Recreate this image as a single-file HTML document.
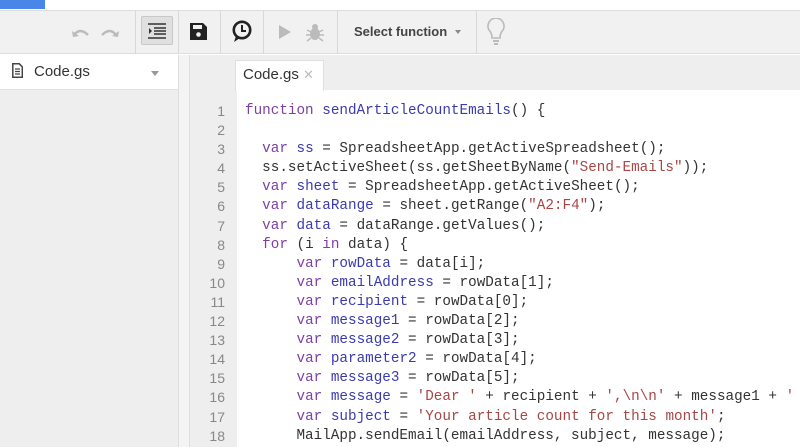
<!DOCTYPE html>
<html><head><style>
*{margin:0;padding:0;box-sizing:border-box}
body{width:800px;height:447px;overflow:hidden;background:#fff;font-family:"Liberation Sans",sans-serif;position:relative}
.abs{position:absolute}
.tb{left:0;top:10px;width:800px;height:44px;background:#f1f1f1;border-top:1px solid #ddd;border-bottom:1px solid #ddd}
.sep{position:absolute;top:0;width:1px;height:43px;background:#d8d8d8}
.code{left:245px;top:102px;font-family:"Liberation Mono",monospace;font-size:14.3px;line-height:19.1px;color:#333;white-space:pre}
.nums{left:190px;top:102px;width:35px;text-align:right;font-size:14px;line-height:19.1px;color:#888;font-family:"Liberation Sans",sans-serif}
.k{color:#7d3fa6}.d{color:#3b3bb0}.s{color:#a84646}
</style></head><body>
<div class="abs" style="left:0;top:0;width:45px;height:9px;background:#4a86e8"></div>
<div class="abs tb">
 <div class="sep" style="left:135px"></div>
 <div class="sep" style="left:178px"></div>
 <div class="sep" style="left:220px"></div>
 <div class="sep" style="left:263px"></div>
 <div class="sep" style="left:337px"></div>
 <div class="sep" style="left:476px"></div>
 <svg class="abs" style="left:70px;top:12px" width="56" height="20" viewBox="0 0 56 20"><path d="M4 12 Q10 4 18 12" fill="none" stroke="#bbb" stroke-width="2.5"/><path d="M2 8 L3 14 L9 13Z" fill="#bbb"/><path d="M32 12 Q40 4 46 12" fill="none" stroke="#bbb" stroke-width="2.5"/><path d="M49 8 L48 14 L42 13Z" fill="#bbb"/></svg>
 <div class="abs" style="left:141px;top:5px;width:32px;height:29px;background:#e0e0e0;border:1px solid #c8c8c8;border-radius:2px"></div>
 <svg class="abs" style="left:148px;top:12px" width="18" height="16" viewBox="0 0 18 16"><path d="M0 1h18M6 5h12M6 8h12M6 11h12M0 15h18" stroke="#333" stroke-width="1.6"/><path d="M1 5l3 3-3 3z" fill="#333"/></svg>
 <svg class="abs" style="left:190px;top:12px" width="17" height="17" viewBox="0 0 17 17"><path d="M0 0h13l4 4v13H0z" fill="#222"/><rect x="3" y="2" width="9" height="4" fill="#f1f1f1"/><circle cx="8.5" cy="11.5" r="2.3" fill="#f1f1f1"/></svg>
 <svg class="abs" style="left:231px;top:9px" width="22" height="24" viewBox="0 0 22 24"><circle cx="11" cy="10" r="8.2" fill="none" stroke="#222" stroke-width="2.6"/><path d="M5 16 L3 22 L9 18" fill="#222"/><path d="M11 5v6h4" fill="none" stroke="#222" stroke-width="2"/></svg>
 <svg class="abs" style="left:279px;top:14px" width="12" height="14"><path d="M0 0L12 7 0 14z" fill="#bbb"/></svg>
 <svg class="abs" style="left:305px;top:11px" width="20" height="20" viewBox="0 0 20 20"><ellipse cx="10" cy="12" rx="5" ry="6" fill="#bbb"/><circle cx="10" cy="5" r="3" fill="#bbb"/><path d="M2 8l4 2M18 8l-4 2M1 13h5M19 13h-5M2 19l4-3M18 19l-4-3" stroke="#bbb" stroke-width="1.5"/></svg>
 <div class="abs" style="left:354px;top:13px;font-size:13px;font-weight:bold;color:#444">Select function</div>
 <div class="abs" style="left:455px;top:19px;border-left:3.5px solid transparent;border-right:3.5px solid transparent;border-top:4px solid #888"></div>
 <svg class="abs" style="left:485px;top:7px" width="22" height="30" viewBox="0 0 22 30"><path d="M7 20 Q7 15 4 12 A8 8 0 1 1 18 12 Q15 15 15 20Z" fill="none" stroke="#bbb" stroke-width="1.6"/><path d="M8 23h6M9 26h4" stroke="#bbb" stroke-width="2"/></svg>
</div>
<div class="abs" style="left:0;top:55px;width:178px;height:392px;background:#eeeeee"></div>
<div class="abs" style="left:0;top:55px;width:178px;height:35px;background:#fff;border-bottom:1px solid #e0e0e0"></div>
<svg class="abs" style="left:12px;top:63px" width="11" height="15" viewBox="0 0 11 15"><path d="M.8.8h6.5l3 3v10.4H.8z" fill="none" stroke="#444" stroke-width="1.5"/><path d="M3 6h5M3 8.5h5M3 11h5" stroke="#444" stroke-width="1.3"/></svg>
<div class="abs" style="left:34px;top:63px;font-size:15px;color:#333">Code.gs</div>
<div class="abs" style="left:151px;top:71px;border-left:4px solid transparent;border-right:4px solid transparent;border-top:5px solid #999"></div>
<div class="abs" style="left:178px;top:55px;width:12px;height:392px;background:#f4f4f4;border-left:1px solid #ddd;border-right:1px solid #ddd"></div>
<div class="abs" style="left:190px;top:55px;width:610px;height:392px;background:#eeeeee"></div>
<div class="abs" style="left:237px;top:90px;width:563px;height:357px;background:#fff"></div>
<div class="abs" style="left:235px;top:60px;width:89px;height:31px;background:#fff;border:1px solid #e0e0e0;border-bottom:none"></div>
<div class="abs" style="left:243px;top:66px;font-size:15px;color:#333">Code.gs <span style="color:#bbb;font-size:13px">✕</span></div>
<div class="abs nums">1<br>2<br>3<br>4<br>5<br>6<br>7<br>8<br>9<br>10<br>11<br>12<br>13<br>14<br>15<br>16<br>17<br>18</div>
<div class="abs code"><span class="k">function</span> <span class="d">sendArticleCountEmails</span>() {

  <span class="k">var</span> <span class="d">ss</span> = SpreadsheetApp.getActiveSpreadsheet();
  ss.setActiveSheet(ss.getSheetByName(<span class="s">"Send-Emails"</span>));
  <span class="k">var</span> <span class="d">sheet</span> = SpreadsheetApp.getActiveSheet();
  <span class="k">var</span> <span class="d">dataRange</span> = sheet.getRange(<span class="s">"A2:F4"</span>);
  <span class="k">var</span> <span class="d">data</span> = dataRange.getValues();
  <span class="k">for</span> (i <span class="k">in</span> data) {
      <span class="k">var</span> <span class="d">rowData</span> = data[i];
      <span class="k">var</span> <span class="d">emailAddress</span> = rowData[1];
      <span class="k">var</span> <span class="d">recipient</span> = rowData[0];
      <span class="k">var</span> <span class="d">message1</span> = rowData[2];
      <span class="k">var</span> <span class="d">message2</span> = rowData[3];
      <span class="k">var</span> <span class="d">parameter2</span> = rowData[4];
      <span class="k">var</span> <span class="d">message3</span> = rowData[5];
      <span class="k">var</span> <span class="d">message</span> = <span class="s">'Dear '</span> + recipient + <span class="s">',\n\n'</span> + message1 + <span class="s">'</span>
      <span class="k">var</span> <span class="d">subject</span> = <span class="s">'Your article count for this month'</span>;
      MailApp.sendEmail(emailAddress, subject, message);</div>
</body></html>
